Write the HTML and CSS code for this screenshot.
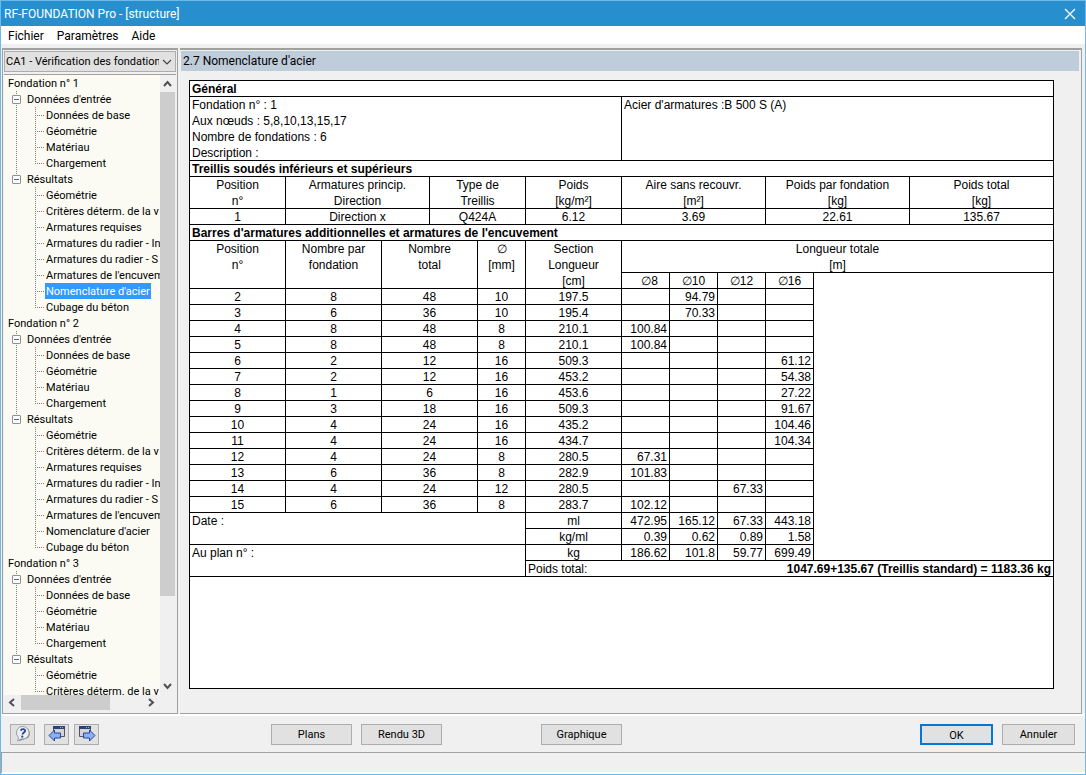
FILE: index.html
```html
<!DOCTYPE html>
<html lang="fr">
<head>
<meta charset="utf-8">
<title>RF-FOUNDATION Pro - [structure]</title>
<link rel="stylesheet" href="styles.css">
</head>
<body>
<div class="window">
  <header class="titlebar">
    <h1 class="window-title">RF-FOUNDATION Pro - [structure]</h1>
    <button class="close" type="button" aria-label="Fermer"><svg width="12" height="12" viewBox="0 0 12 12"><path d="M1 1l10 10M11 1L1 11" fill="none" stroke="#fff" stroke-width="1.3"/></svg></button>
  </header>
  <nav class="menubar">
    <button type="button">Fichier</button><button type="button">Paramètres</button><button type="button">Aide</button>
  </nav>
  <div class="workspace">
    <aside class="sidebar">
      <div class="case-picker">
        <select class="case-select" aria-label="Cas de calcul"><option>CA1 - Vérification des fondation</option></select>
        <svg class="case-arrow" width="10" height="6" viewBox="0 0 10 6"><path d="M1 1l4 4 4-4" fill="none" stroke="#444" stroke-width="1.2"/></svg>
      </div>
      <div class="tree-box">
        <div class="tree-view">
          <ul class="tree">
            <li><a class="label" href="#f1">Fondation n° 1</a>
              <ul class="groups">
                <li class="group"><button class="toggle" type="button" aria-label="Réduire"></button><a class="label" href="#e1">Données d'entrée</a>
                  <ul class="leaves">
                    <li><a class="label" href="#">Données de base</a></li>
                    <li><a class="label" href="#">Géométrie</a></li>
                    <li><a class="label" href="#">Matériau</a></li>
                    <li><a class="label" href="#">Chargement</a></li>
                  </ul></li>
                <li class="group"><button class="toggle" type="button" aria-label="Réduire"></button><a class="label" href="#r1">Résultats</a>
                  <ul class="leaves">
                    <li><a class="label" href="#">Géométrie</a></li>
                    <li><a class="label" href="#">Critères déterm. de la v</a></li>
                    <li><a class="label" href="#">Armatures requises</a></li>
                    <li><a class="label" href="#">Armatures du radier - In</a></li>
                    <li><a class="label" href="#">Armatures du radier - S</a></li>
                    <li><a class="label" href="#">Armatures de l'encuvem</a></li>
                    <li><a class="label selected" href="#">Nomenclature d'acier</a></li>
                    <li><a class="label" href="#">Cubage du béton</a></li>
                  </ul></li>
              </ul></li>
            <li><a class="label" href="#f2">Fondation n° 2</a>
              <ul class="groups">
                <li class="group"><button class="toggle" type="button" aria-label="Réduire"></button><a class="label" href="#e2">Données d'entrée</a>
                  <ul class="leaves">
                    <li><a class="label" href="#">Données de base</a></li>
                    <li><a class="label" href="#">Géométrie</a></li>
                    <li><a class="label" href="#">Matériau</a></li>
                    <li><a class="label" href="#">Chargement</a></li>
                  </ul></li>
                <li class="group"><button class="toggle" type="button" aria-label="Réduire"></button><a class="label" href="#r2">Résultats</a>
                  <ul class="leaves">
                    <li><a class="label" href="#">Géométrie</a></li>
                    <li><a class="label" href="#">Critères déterm. de la v</a></li>
                    <li><a class="label" href="#">Armatures requises</a></li>
                    <li><a class="label" href="#">Armatures du radier - In</a></li>
                    <li><a class="label" href="#">Armatures du radier - S</a></li>
                    <li><a class="label" href="#">Armatures de l'encuvem</a></li>
                    <li><a class="label" href="#">Nomenclature d'acier</a></li>
                    <li><a class="label" href="#">Cubage du béton</a></li>
                  </ul></li>
              </ul></li>
            <li><a class="label" href="#f3">Fondation n° 3</a>
              <ul class="groups">
                <li class="group"><button class="toggle" type="button" aria-label="Réduire"></button><a class="label" href="#e3">Données d'entrée</a>
                  <ul class="leaves">
                    <li><a class="label" href="#">Données de base</a></li>
                    <li><a class="label" href="#">Géométrie</a></li>
                    <li><a class="label" href="#">Matériau</a></li>
                    <li><a class="label" href="#">Chargement</a></li>
                  </ul></li>
                <li class="group"><button class="toggle" type="button" aria-label="Réduire"></button><a class="label" href="#r3">Résultats</a>
                  <ul class="leaves">
                    <li><a class="label" href="#">Géométrie</a></li>
                    <li><a class="label" href="#">Critères déterm. de la v</a></li>
                  </ul></li>
              </ul></li>
          </ul>
        </div>
        <div class="scroll-v">
          <svg width="15" height="17" viewBox="0 0 15 17"><path d="M4 11l3.500-4 3.500 4" fill="none" stroke="#505050" stroke-width="2"/></svg>
          <div class="track"><div class="thumb-v"></div></div>
          <svg width="15" height="17" viewBox="0 0 15 17"><path d="M4 6l3.500 4 3.500-4" fill="none" stroke="#505050" stroke-width="2"/></svg>
        </div>
        <div class="scroll-h">
          <svg width="17" height="15" viewBox="0 0 17 15"><path d="M10 4L6 7.500l4 3.500" fill="none" stroke="#505050" stroke-width="2"/></svg>
          <div class="track"><div class="thumb-h"></div></div>
          <svg width="17" height="15" viewBox="0 0 17 15"><path d="M6 4l4 3.500L6 11" fill="none" stroke="#505050" stroke-width="2"/></svg>
        </div>
      </div>
    </aside>
    <main class="content">
      <h2 class="content-title">2.7 Nomenclature d'acier</h2>
      <div class="sheet">
        <table class="steel">
          <colgroup><col class="w96"><col class="w96"><col class="w48"><col class="w48"><col class="w48"><col class="w96"><col class="w48"><col class="w48"><col class="w48"><col class="w48"><col class="w96"><col></colgroup>
          <tbody>
            <tr><th class="section" colspan="12">Général</th></tr>
            <tr>
              <td class="left" colspan="6"><span class="line">Fondation n° : 1</span><span class="line">Aux nœuds : 5,8,10,13,15,17</span><span class="line">Nombre de fondations : 6</span><span class="line">Description :</span></td>
              <td class="left" colspan="6">Acier d'armatures :B 500 S (A)</td>
            </tr>
            <tr><th class="section" colspan="12">Treillis soudés inférieurs et supérieurs</th></tr>
            <tr>
              <th><span class="line">Position</span><span class="line">n°</span></th>
              <th colspan="2"><span class="line">Armatures princip.</span><span class="line">Direction</span></th>
              <th colspan="2"><span class="line">Type de</span><span class="line">Treillis</span></th>
              <th><span class="line">Poids</span><span class="line">[kg/m²]</span></th>
              <th colspan="3"><span class="line">Aire sans recouvr.</span><span class="line">[m²]</span></th>
              <th colspan="2"><span class="line">Poids par fondation</span><span class="line">[kg]</span></th>
              <th><span class="line">Poids total</span><span class="line">[kg]</span></th>
            </tr>
            <tr><td>1</td><td colspan="2">Direction x</td><td colspan="2">Q424A</td><td>6.12</td><td colspan="3">3.69</td><td colspan="2">22.61</td><td>135.67</td></tr>
            <tr><th class="section" colspan="12">Barres d'armatures additionnelles et armatures de l'encuvement</th></tr>
            <tr>
              <th rowspan="2"><span class="line">Position</span><span class="line">n°</span></th>
              <th rowspan="2"><span class="line">Nombre par</span><span class="line">fondation</span></th>
              <th rowspan="2" colspan="2"><span class="line">Nombre</span><span class="line">total</span></th>
              <th rowspan="2"><span class="line">∅</span><span class="line">[mm]</span></th>
              <th rowspan="2"><span class="line">Section</span><span class="line">Longueur</span><span class="line">[cm]</span></th>
              <th colspan="6"><span class="line">Longueur totale</span><span class="line">[m]</span></th>
            </tr>
            <tr><th class="dia">∅8</th><th>∅10</th><th>∅12</th><th>∅16</th><td class="blank" colspan="2" rowspan="18"></td></tr>
            <tr><td>2</td><td>8</td><td colspan="2">48</td><td>10</td><td>197.5</td><td class="num"></td><td class="num">94.79</td><td class="num"></td><td class="num"></td></tr>
            <tr><td>3</td><td>6</td><td colspan="2">36</td><td>10</td><td>195.4</td><td class="num"></td><td class="num">70.33</td><td class="num"></td><td class="num"></td></tr>
            <tr><td>4</td><td>8</td><td colspan="2">48</td><td>8</td><td>210.1</td><td class="num">100.84</td><td class="num"></td><td class="num"></td><td class="num"></td></tr>
            <tr><td>5</td><td>8</td><td colspan="2">48</td><td>8</td><td>210.1</td><td class="num">100.84</td><td class="num"></td><td class="num"></td><td class="num"></td></tr>
            <tr><td>6</td><td>2</td><td colspan="2">12</td><td>16</td><td>509.3</td><td class="num"></td><td class="num"></td><td class="num"></td><td class="num">61.12</td></tr>
            <tr><td>7</td><td>2</td><td colspan="2">12</td><td>16</td><td>453.2</td><td class="num"></td><td class="num"></td><td class="num"></td><td class="num">54.38</td></tr>
            <tr><td>8</td><td>1</td><td colspan="2">6</td><td>16</td><td>453.6</td><td class="num"></td><td class="num"></td><td class="num"></td><td class="num">27.22</td></tr>
            <tr><td>9</td><td>3</td><td colspan="2">18</td><td>16</td><td>509.3</td><td class="num"></td><td class="num"></td><td class="num"></td><td class="num">91.67</td></tr>
            <tr><td>10</td><td>4</td><td colspan="2">24</td><td>16</td><td>435.2</td><td class="num"></td><td class="num"></td><td class="num"></td><td class="num">104.46</td></tr>
            <tr><td>11</td><td>4</td><td colspan="2">24</td><td>16</td><td>434.7</td><td class="num"></td><td class="num"></td><td class="num"></td><td class="num">104.34</td></tr>
            <tr><td>12</td><td>4</td><td colspan="2">24</td><td>8</td><td>280.5</td><td class="num">67.31</td><td class="num"></td><td class="num"></td><td class="num"></td></tr>
            <tr><td>13</td><td>6</td><td colspan="2">36</td><td>8</td><td>282.9</td><td class="num">101.83</td><td class="num"></td><td class="num"></td><td class="num"></td></tr>
            <tr><td>14</td><td>4</td><td colspan="2">24</td><td>12</td><td>280.5</td><td class="num"></td><td class="num"></td><td class="num">67.33</td><td class="num"></td></tr>
            <tr><td>15</td><td>6</td><td colspan="2">36</td><td>8</td><td>283.7</td><td class="num">102.12</td><td class="num"></td><td class="num"></td><td class="num"></td></tr>
            <tr><td class="left" colspan="5" rowspan="2">Date :</td><td>ml</td><td class="num">472.95</td><td class="num">165.12</td><td class="num">67.33</td><td class="num">443.18</td></tr>
            <tr><td>kg/ml</td><td class="num">0.39</td><td class="num">0.62</td><td class="num">0.89</td><td class="num">1.58</td></tr>
            <tr><td class="left" colspan="5" rowspan="2">Au plan n° :</td><td>kg</td><td class="num">186.62</td><td class="num">101.8</td><td class="num">59.77</td><td class="num">699.49</td></tr>
            <tr><th class="left total-label">Poids total:</th><td class="total" colspan="6">1047.69+135.67 (Treillis standard) = 1183.36 kg</td></tr>
          </tbody>
        </table>
      </div>
    </main>
  </div>
  <div class="actions">
    <button class="tool" type="button" aria-label="Aide"><svg width="18" height="18" viewBox="0 0 18 18"><path d="M10.500 2.300a6.300 6.300 0 0 1 3.200 10.800L4.500 16.300z" fill="#777"/><path d="M8.800 1.500a6.300 6.300 0 1 1-1.600 12.400L3.800 16l.6-3.600A6.300 6.300 0 0 1 8.800 1.500z" fill="#eceff4" stroke="#9a9da3"/><path d="M6.700 5.600c.7-2.100 4.600-2 4.400.3-.1 1.700-2.400 1.700-2.600 3.600" fill="none" stroke="#26468f" stroke-width="1.800"/><circle cx="8.300" cy="11.700" r="1.100" fill="#26468f"/></svg></button>
    <button class="tool tool-prev" type="button" aria-label="Table précédente"><svg width="18" height="18" viewBox="0 0 18 18"><path d="M5.500 2.500h11v9h-11z" fill="#d4d4d6" stroke="#555"/><path d="M5 1h12v3H5z" fill="#2b4276"/><path d="M12 2.500h1M14 2.500h1" stroke="#9db4e8"/><path d="M1 10.500L6.500 5v3h6v5h-6v3z" fill="#8facf0" stroke="#234aa0"/></svg></button>
    <button class="tool tool-next" type="button" aria-label="Table suivante"><svg width="18" height="18" viewBox="0 0 18 18"><path d="M1.500 2.500h11v9h-11z" fill="#d4d4d6" stroke="#555"/><path d="M1 1h12v3H1z" fill="#2b4276"/><path d="M8 2.500h1M10 2.500h1" stroke="#9db4e8"/><path d="M17 10.500L11.500 5v3h-6v5h6v3z" fill="#8facf0" stroke="#234aa0"/></svg></button>
    <button class="push plans" type="button">Plans</button>
    <button class="push rendu" type="button">Rendu 3D</button>
    <button class="push graphique" type="button">Graphique</button>
    <button class="push ok" type="button">OK</button>
    <button class="push cancel" type="button">Annuler</button>
  </div>
  <footer class="statusbar"></footer>
</div>
</body>
</html>
```
FILE: styles.css
```css
* { box-sizing: border-box; }

body {
  margin: 0;
  font: 11px/16px Roboto, "DejaVu Sans Condensed", sans-serif;
  color: #000;
}

button, select { font: inherit; color: inherit; }
svg { display: block; flex: none; }
ul { list-style: none; margin: 0; padding: 0; }

.window {
  display: flex;
  flex-direction: column;
  height: 100vh;
  background: #f0f0f0;
  border: 1px solid #6cb9ea;
}

/* Title and menu */
.titlebar {
  display: flex;
  align-items: center;
  justify-content: space-between;
  height: 25px;
  flex: none;
  padding: 0 9px 0 3px;
  background: #288fce;
  color: #fff;
}
.window-title { margin: 0; font: 12px/16px Roboto, sans-serif; }
.close { border: 0; padding: 0; background: none; }

.menubar {
  display: flex;
  gap: 13px;
  height: 18px;
  flex: none;
  padding: 0 7px;
  background: #fff;
}
.menubar button {
  border: 0;
  padding: 0;
  background: none;
  font: 12px/20px Roboto, sans-serif;
}

/* Panels */
.workspace {
  display: flex;
  flex: 1;
  min-height: 0;
  gap: 2px;
  padding: 4px 3px 0 1px;
  border-bottom: 2px solid #fff;
}
.sidebar {
  display: flex;
  flex-direction: column;
  width: 176px;
  flex: none;
  padding: 1px;
  border: 1px solid #a0a0a0;
  border-top-width: 2px;
}
.case-picker {
  display: grid;
  align-items: center;
  margin-bottom: 2px;
}
.case-select, .case-arrow { grid-area: 1 / 1; }
.case-select {
  appearance: none;
  width: 100%;
  height: 21px;
  padding: 1px 16px 0 1px;
  border: 1px solid #adadad;
  border-radius: 0;
  background: #e1e1e1;
}
.case-arrow { justify-self: end; margin-right: 4px; pointer-events: none; }

.tree-box {
  display: grid;
  grid-template: minmax(0, 1fr) 17px / minmax(0, 1fr) 15px;
  flex: 1;
  min-height: 0;
  padding-right: 1px;
  border-top: 1px solid #a0a0a0;
}
.tree-view { overflow: hidden; background: #fbfbf3; }
.tree { padding-left: 3px; white-space: nowrap; }
.tree li { line-height: 16px; }
.label {
  display: inline-block;
  height: 16px;
  padding: 0 1px;
  color: #000;
  line-height: 18px;
  text-decoration: none;
  vertical-align: top;
}
.selected { background: #3399ff; color: #fff; }

.groups { padding-left: 5px; }
.group { background: repeating-linear-gradient(#808080 0 1px, transparent 1px 2px) 4px 0 / 1px 100% no-repeat; }
.group:last-child { background-size: 1px 8px; }
.toggle {
  width: 9px;
  height: 9px;
  margin: 4px 5px 3px 0;
  padding: 0;
  border: 1px solid #919191;
  border-radius: 1px;
  background: linear-gradient(#4b63a7, #4b63a7) center / 5px 1px no-repeat, #fff;
  vertical-align: top;
}
.leaves { padding-left: 23px; }
.leaves li {
  padding-left: 10px;
  background:
    repeating-linear-gradient(#808080 0 1px, transparent 1px 2px) 0 0 / 1px 100% no-repeat,
    repeating-linear-gradient(90deg, #808080 0 1px, transparent 1px 2px) 0 8px / 9px 1px no-repeat;
}
.leaves li:last-child { background-size: 1px 8px, 9px 1px; }

.scroll-v, .scroll-h { display: flex; background: #f0f0f0; }
.scroll-v { flex-direction: column; }
.scroll-h { height: 15px; }
.track { flex: 1; }
.thumb-v { height: 86%; background: #cdcdcd; }
.thumb-h { width: 73%; height: 15px; background: #cdcdcd; }

.content {
  display: flex;
  flex-direction: column;
  flex: 1;
  min-width: 0;
  padding: 1px 1px 24px 0;
  border: solid #a0a0a0;
  border-width: 2px 1px 1px 0;
}
.content-title {
  margin: 0 1px 9px;
  height: 20px;
  padding-left: 2px;
  background: #bfccda;
  font: 12px/20px Roboto, sans-serif;
}
.sheet {
  flex: 1;
  min-height: 0;
  margin: 0 26px 0 9px;
  border: 1px solid #000;
  background: #fff;
}

/* Steel schedule */
.steel {
  width: 100%;
  table-layout: fixed;
  border-collapse: separate;
  border-spacing: 0;
  font: 12px/14px "Liberation Sans", Arial, sans-serif;
}
.w96 { width: 96px; }
.w48 { width: 48px; }
.steel th, .steel td {
  height: 16px;
  padding: 1px 0 0;
  border: solid #000;
  border-width: 0 1px 1px 0;
  font-weight: normal;
  text-align: center;
  vertical-align: top;
  white-space: nowrap;
}
.steel tr > [colspan="12"], .steel tr > [colspan="6"]:last-child, .steel tr:nth-child(-n+5) > :last-child, .steel .blank { border-right: 0; }
.steel .section { padding-left: 2px; font-weight: bold; text-align: left; }
.steel .left { padding-left: 2px; text-align: left; }
.steel .num { padding-right: 2px; text-align: right; }
.steel .dia { padding-left: 8px; }
.steel .total-label { border-right: 0; }
.steel .total { padding-right: 2px; text-align: right; font-weight: bold; }
.line { display: block; height: 16px; }
.line:last-child { height: 14px; }

/* Bottom buttons */
.actions {
  display: flex;
  align-items: center;
  height: 37px;
  flex: none;
  padding: 0 10px 0 9px;
  border-bottom: 1px solid #a0a0a0;
}
.tool, .push {
  height: 21px;
  padding: 0;
  border: 1px solid #adadad;
  background: #e1e1e1;
}
.tool { display: grid; place-items: center; width: 25px; }
.tool-prev { margin-left: 9px; }
.tool-next { margin-left: 5px; }
.push { width: 81px; padding-top: 2px; }
.plans { margin-left: 172px; }
.rendu { margin-left: 9px; }
.graphique { margin-left: 99px; }
.ok { width: 73px; margin-left: auto; border: 2px solid #0078d7; }
.cancel { width: 73px; margin-left: 9px; }
.statusbar { height: 21px; flex: none; border-left: 1px solid #a0a0a0; border-bottom: 2px solid #fff; }
```
